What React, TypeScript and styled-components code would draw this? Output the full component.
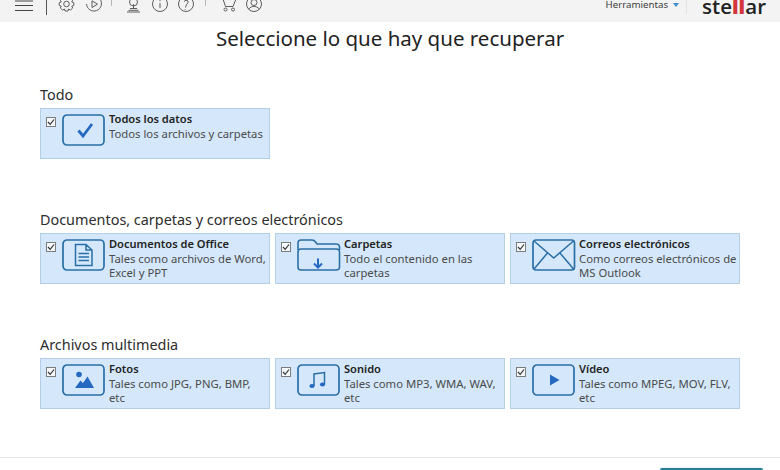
import React from "react";
import styled, { createGlobalStyle } from "styled-components";

const Global = createGlobalStyle`
  html, body { margin: 0; padding: 0; background: #fff; }
  body { font-family: "Noto Sans", "Open Sans", sans-serif; color: #2b2b2b; }
`;

const Page = styled.div`
  width: 780px;
  height: 470px;
  overflow: hidden;
  display: flex;
  flex-direction: column;
`;

const Toolbar = styled.header`
  height: 22px;
  flex: none;
  background: #f3f3f3;
  display: flex;
  align-items: flex-start;
  overflow: hidden;
  padding-left: 15px;
`;

const ToolIcon = styled.svg<{ $gap: number; $top: number }>`
  flex: none;
  margin-left: ${(p) => p.$gap}px;
  margin-top: ${(p) => p.$top}px;
  fill: none;
  stroke: #5d5d5d;
  stroke-width: 1;
`;

const Divider = styled.span<{ $gap: number; $height: number; $tone?: string }>`
  flex: none;
  width: 1px;
  height: ${(p) => p.$height}px;
  margin-left: ${(p) => p.$gap}px;
  background: ${(p) => p.$tone ?? (p.$height > 10 ? "#555" : "#b5b5b5")};
`;

const ToolsMenu = styled.div`
  margin-left: auto;
  display: flex;
  align-items: flex-start;
`;

const ToolsLabel = styled.span`
  font-size: 9.7px;
  line-height: 10px;
  color: #3c3c3c;
`;

const Caret = styled.span`
  width: 0;
  height: 0;
  margin: 3px 0 0 5px;
  border-left: 3.5px solid transparent;
  border-right: 3.5px solid transparent;
  border-top: 4px solid #3f8fd0;
`;

const Logo = styled.div`
  margin: -6px 14px 0 15px;
  font-family: "Open Sans", sans-serif;
  font-size: 20.5px;
  line-height: 24px;
  font-weight: 600;
  color: #222;
`;

const LogoMark = styled.span`
  color: #d2353a;
  font-weight: 800;
`;

const Title = styled.h1`
  margin: 4px 0 0;
  height: 24px;
  text-align: center;
  font-size: 20.5px;
  line-height: 24px;
  font-weight: 400;
  color: #222;
`;

const Sections = styled.main`
  flex: 1;
  display: flex;
  flex-direction: column;
  gap: 52px;
  padding: 36px 40px 0;
`;

const Section = styled.section`
  display: flex;
  flex-direction: column;
`;

const Heading = styled.h2`
  margin: 0;
  height: 18px;
  font-size: 14.4px;
  line-height: 18px;
  font-weight: 400;
  color: #2d2d2d;
`;

const Row = styled.div`
  display: grid;
  grid-template-columns: repeat(3, 230px);
  gap: 5px;
  margin-top: 4px;
`;

const Card = styled.label`
  box-sizing: border-box;
  height: 51px;
  display: flex;
  align-items: flex-start;
  background: #d5e8fb;
  border: 1px solid #b4cfe4;
  padding: 5px 2px 0 5px;
`;

const CheckBox = styled.span`
  box-sizing: border-box;
  flex: none;
  width: 10px;
  height: 10px;
  margin-top: 3px;
  border: 1px solid #7c7c7c;
  background: #f6f9fc;
  display: flex;
  align-items: center;
  justify-content: center;
`;

const IconSlot = styled.span`
  flex: none;
  width: 44px;
  height: 32px;
  margin-left: 6px;
  display: block;
`;

const CardIcon = styled.svg`
  display: block;
`;

const CardText = styled.div`
  margin-left: 3px;
  min-width: 0;
  font-size: 11.3px;
  line-height: 14.6px;
  margin-top: -2px;
`;

const CardTitle = styled.div`
  font-weight: 600;
  font-size: 11.1px;
  color: #222;
`;

const CardDesc = styled.div`
  color: #4a4a4a;
`;

const Footer = styled.footer`
  flex: none;
  height: 2px;
  border-top: 1px solid #e6e6e6;
  display: flex;
  justify-content: flex-end;
  padding: 10px 17px 0 0;
`;

const NextButton = styled.span`
  width: 103px;
  height: 2px;
  background: #2f7d96;
  border-radius: 2px 2px 0 0;
  box-shadow: 0 0 2px #9fe3ee;
`;

const B = "#2a6ea6";
const A = "#2468c0";

const Frame = ({ children }: { children: React.ReactNode }) => (
  <CardIcon width="44" height="32" viewBox="0 0 44 32">
    <rect x="1" y="1" width="41" height="30" rx="4" fill="none" stroke={B} strokeWidth="1.7" />
    {children}
  </CardIcon>
);

const icons: Record<string, React.ReactNode> = {
  check: (
    <Frame>
      <path d="M16.5 16.5 L21 22 L30 10" fill="none" stroke={A} strokeWidth="2.8" />
    </Frame>
  ),
  doc: (
    <Frame>
      <path d="M13.5 5.5 H24 L30 11 V26.5 H13.5 Z M24 5.5 V11 H30" fill="none" stroke={B} strokeWidth="1.5" />
      <path d="M16.5 14.5 H27 M16.5 18 H27 M16.5 21.5 H27" fill="none" stroke={B} strokeWidth="1.4" />
    </Frame>
  ),
  folder: (
    <CardIcon width="44" height="32" viewBox="0 0 44 32">
      <path d="M1 11 V4 Q1 1 4 1 H15 Q17 1 18.5 3 L20 5 H39 Q42.500 5 42.500 8 V11" fill="none" stroke={B} strokeWidth="1.6" />
      <path d="M4 10 H39 Q42.500 10 42.500 13 V28 Q42.500 31 39 31 H4 Q1 31 1 28 V13 Q1 10 4 10 Z" fill="none" stroke={B} strokeWidth="1.6" />
      <path d="M21 19.500 V28 M17 24.500 L21 28.500 L25 24.500" fill="none" stroke={A} strokeWidth="2" />
    </CardIcon>
  ),
  mail: (
    <CardIcon width="44" height="32" viewBox="0 0 44 32">
      <rect x="1" y="1" width="41.500" height="30" rx="3" fill="none" stroke={B} strokeWidth="1.7" />
      <path d="M2 2 L21.700 19 L41.500 2 M2 30 L15.500 14 M41.500 30 L28 14" fill="none" stroke={B} strokeWidth="1.5" />
    </CardIcon>
  ),
  photo: (
    <Frame>
      <circle cx="17" cy="10.500" r="2.800" fill={A} />
      <path d="M13 24 L18.500 16.500 L21 19 L25.500 12.500 L32 24 Z" fill={A} />
    </Frame>
  ),
  music: (
    <Frame>
      <path d="M17 22 V10 L27.500 8.500 V20" fill="none" stroke={B} strokeWidth="1.5" />
      <ellipse cx="15" cy="22" rx="2.600" ry="1.900" fill={A} />
      <ellipse cx="25.500" cy="20.500" rx="2.600" ry="1.900" fill={A} />
    </Frame>
  ),
  play: (
    <Frame>
      <path d="M18 10.500 L27.500 16 L18 21.500 Z" fill={A} />
    </Frame>
  ),
};

type Item = { icon: string; title: string; desc: string };

const groups: { heading: string; items: Item[] }[] = [
  { heading: "Todo", items: [{ icon: "check", title: "Todos los datos", desc: "Todos los archivos y carpetas" }] },
  {
    heading: "Documentos, carpetas y correos electrónicos",
    items: [
      { icon: "doc", title: "Documentos de Office", desc: "Tales como archivos de Word, Excel y PPT" },
      { icon: "folder", title: "Carpetas", desc: "Todo el contenido en las carpetas" },
      { icon: "mail", title: "Correos electrónicos", desc: "Como correos electrónicos de MS Outlook" },
    ],
  },
  {
    heading: "Archivos multimedia",
    items: [
      { icon: "photo", title: "Fotos", desc: "Tales como JPG, PNG, BMP, etc" },
      { icon: "music", title: "Sonido", desc: "Tales como MP3, WMA, WAV, etc" },
      { icon: "play", title: "Vídeo", desc: "Tales como MPEG, MOV, FLV, etc" },
    ],
  },
];

export default function App() {
  return (
    <Page>
      <Global />
      <Toolbar>
        <ToolIcon $gap={0} $top={0} width="18" height="12" viewBox="0 0 18 12">
          <path d="M0 1 H18 M0 5.500 H18 M0 10.500 H18" stroke="#444" />
        </ToolIcon>
        <Divider $gap={13} $height={15} />
        <ToolIcon $gap={11} $top={-4} width="17" height="16" viewBox="0 0 17 16">
          <circle cx="8.500" cy="8" r="2.800" />
          <path d="M7 1 H10 L10.500 3 L12.500 2.200 L14.700 4.300 L13.700 6 L15.800 6.800 V9.500 L13.800 10.200 L14.700 12 L12.500 14 L10.500 13 L10 15 H7 L6.500 13 L4.500 14 L2.300 12 L3.300 10.200 L1.200 9.500 V6.800 L3.300 6 L2.300 4.300 L4.500 2.200 L6.500 3 Z" />
        </ToolIcon>
        <ToolIcon $gap={10} $top={-4} width="18" height="17" viewBox="0 0 18 17">
          <path d="M3 3 A7.500 7.500 0 1 1 1.500 8" />
          <path d="M1 2.500 L3 3.500 L4 1" />
          <path d="M7 4.800 L12.500 8.200 L7 11.500 Z" />
        </ToolIcon>
        <Divider $gap={8} $height={6} />
        <ToolIcon $gap={14} $top={-3} width="15" height="16" viewBox="0 0 15 16">
          <circle cx="7.500" cy="5" r="4" />
          <path d="M7.500 7 V11 M4 11.500 H11 M1 15 H14 M2.500 13.300 H12.500" />
        </ToolIcon>
        <ToolIcon $gap={10} $top={-4} width="18" height="17" viewBox="0 0 18 17">
          <circle cx="9" cy="8" r="7.500" />
          <path d="M9 7 V12 M9 4 V5.200" />
        </ToolIcon>
        <ToolIcon $gap={8} $top={-4} width="18" height="17" viewBox="0 0 18 17">
          <circle cx="9" cy="8" r="7.500" />
          <path d="M7 5.500 Q9 3 11 5 Q11.500 7 9.500 8.500 L8.500 11.500 M8.200 13 V13.800" />
        </ToolIcon>
        <Divider $gap={10} $height={6} />
        <ToolIcon $gap={14} $top={-2} width="17" height="14" viewBox="0 0 17 14">
          <path d="M0 1 H3 L5.500 8.500 H13 L16 1" />
          <circle cx="5.500" cy="11.500" r="1.500" />
          <circle cx="13" cy="11.500" r="1.500" />
        </ToolIcon>
        <ToolIcon $gap={8} $top={-4} width="18" height="17" viewBox="0 0 18 17">
          <circle cx="9" cy="8" r="7.500" />
          <circle cx="9" cy="6.500" r="3" />
          <path d="M3.500 13 Q9 7.500 14.500 13" />
        </ToolIcon>
        <ToolsMenu>
          <ToolsLabel>Herramientas</ToolsLabel>
          <Caret />
          <Divider $gap={7} $height={14} $tone="#e2e2e2" />
          <Logo>
            ste<LogoMark>ll</LogoMark>ar
          </Logo>
        </ToolsMenu>
      </Toolbar>
      <Title>Seleccione lo que hay que recuperar</Title>
      <Sections>
        {groups.map((g) => (
          <Section key={g.heading}>
            <Heading>{g.heading}</Heading>
            <Row>
              {g.items.map((it) => (
                <Card key={it.title}>
                  <CheckBox>
                    <svg width="8" height="8" viewBox="0 0 8 8">
                      <path d="M1 4 L3.200 6.300 L7 1.500" fill="none" stroke="#333" strokeWidth="1.200" />
                    </svg>
                  </CheckBox>
                  <IconSlot>{icons[it.icon]}</IconSlot>
                  <CardText>
                    <CardTitle>{it.title}</CardTitle>
                    <CardDesc>{it.desc}</CardDesc>
                  </CardText>
                </Card>
              ))}
            </Row>
          </Section>
        ))}
      </Sections>
      <Footer>
        <NextButton />
      </Footer>
    </Page>
  );
}
